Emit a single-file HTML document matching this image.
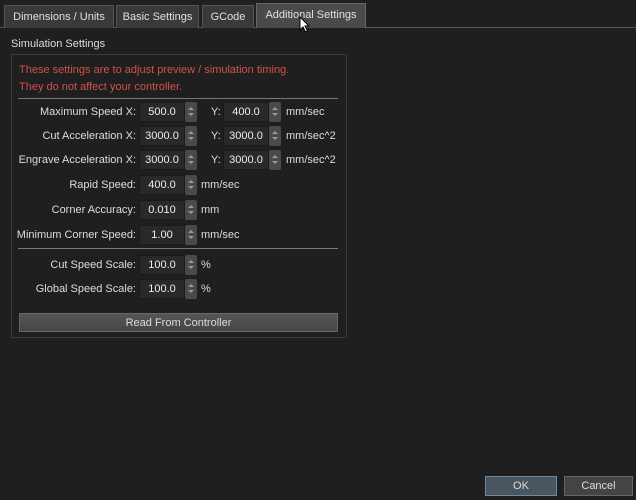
<!DOCTYPE html><html><head><style>
*{margin:0;padding:0;box-sizing:border-box}
body{width:636px;height:500px;background:#1f1f1f;font-family:"Liberation Sans",sans-serif;font-size:11px;color:#ddd;position:relative;overflow:hidden}
.a{position:absolute}
.tab{position:absolute;top:5px;height:23px;background:#3a3a3a;border:1px solid #555;border-bottom:none;line-height:22px;text-align:center;color:#e0e0e0}
.lbl{position:absolute;text-align:right;width:136px;left:0;line-height:20px}
.f{position:absolute;height:20px;background:#292929;border:1px solid #1a1a1a;text-align:center;line-height:18px;color:#eee}
.s{position:absolute;width:12px;height:20px;background:#4a4a4a;border-radius:2px}
.s:before{content:"";position:absolute;left:3px;top:5px;border:3px solid transparent;border-bottom:3px solid #999;border-top:none}
.s:after{content:"";position:absolute;left:3px;top:11px;border:3px solid transparent;border-top:3px solid #999;border-bottom:none}
.u{position:absolute;line-height:20px}
</style></head><body>
<div class="a" style="left:0;top:27px;width:636px;height:1px;background:#555"></div>
<div class="tab" style="left:4px;width:110px">Dimensions / Units</div>
<div class="tab" style="left:116px;width:83px">Basic Settings</div>
<div class="tab" style="left:202px;width:52px">GCode</div>
<div class="tab" style="left:256px;top:3px;height:25px;width:110px;background:#4a4a4a;border-color:#666">Additional Settings</div>
<div class="a" style="left:11px;top:37px;line-height:14px">Simulation Settings</div>
<div class="a" style="left:11px;top:54px;width:336px;height:284px;border:1px solid #3a3a3a"></div>
<div class="a" style="left:19px;top:62px;line-height:17px;color:#d0534a">These settings are to adjust preview / simulation timing.<br>They do not affect your controller.</div>
<div class="a" style="left:18px;top:98px;width:320px;height:1px;background:#777"></div>
<div class="a" style="left:18px;top:248px;width:320px;height:1px;background:#777"></div>

<div class="lbl" style="top:102px">Maximum Speed X:</div><div class="f" style="left:139px;top:102px;width:46px">500.0</div><div class="s" style="left:185px;top:102px"></div>
<div class="u" style="left:211px;top:102px">Y:</div><div class="f" style="left:223px;top:102px;width:46px">400.0</div><div class="s" style="left:269px;top:102px"></div><div class="u" style="left:286px;top:102px">mm/sec</div>

<div class="lbl" style="top:126px">Cut Acceleration X:</div><div class="f" style="left:139px;top:126px;width:46px">3000.0</div><div class="s" style="left:185px;top:126px"></div>
<div class="u" style="left:211px;top:126px">Y:</div><div class="f" style="left:223px;top:126px;width:46px">3000.0</div><div class="s" style="left:269px;top:126px"></div><div class="u" style="left:286px;top:126px">mm/sec^2</div>

<div class="lbl" style="top:150px">Engrave Acceleration X:</div><div class="f" style="left:139px;top:150px;width:46px">3000.0</div><div class="s" style="left:185px;top:150px"></div>
<div class="u" style="left:211px;top:150px">Y:</div><div class="f" style="left:223px;top:150px;width:46px">3000.0</div><div class="s" style="left:269px;top:150px"></div><div class="u" style="left:286px;top:150px">mm/sec^2</div>

<div class="lbl" style="top:175px">Rapid Speed:</div><div class="f" style="left:139px;top:175px;width:46px">400.0</div><div class="s" style="left:185px;top:175px"></div><div class="u" style="left:201px;top:175px">mm/sec</div>
<div class="lbl" style="top:200px">Corner Accuracy:</div><div class="f" style="left:139px;top:200px;width:46px">0.010</div><div class="s" style="left:185px;top:200px"></div><div class="u" style="left:201px;top:200px">mm</div>
<div class="lbl" style="top:225px">Minimum Corner Speed:</div><div class="f" style="left:139px;top:225px;width:46px">1.00</div><div class="s" style="left:185px;top:225px"></div><div class="u" style="left:201px;top:225px">mm/sec</div>

<div class="lbl" style="top:255px">Cut Speed Scale:</div><div class="f" style="left:139px;top:255px;width:46px">100.0</div><div class="s" style="left:185px;top:255px"></div><div class="u" style="left:201px;top:255px">%</div>
<div class="lbl" style="top:279px">Global Speed Scale:</div><div class="f" style="left:139px;top:279px;width:46px">100.0</div><div class="s" style="left:185px;top:279px"></div><div class="u" style="left:201px;top:279px">%</div>

<div class="a" style="left:19px;top:313px;width:319px;height:19px;background:linear-gradient(#555,#464646);border:1px solid #666;text-align:center;line-height:18px">Read From Controller</div>
<div class="a" style="left:485px;top:476px;width:72px;height:20px;background:#4a5560;border:1px solid #6a8aa5;text-align:center;line-height:19px">OK</div>
<div class="a" style="left:564px;top:476px;width:69px;height:20px;background:#444;border:1px solid #666;text-align:center;line-height:19px">Cancel</div>
<svg class="a" style="left:299px;top:16px" width="12" height="18" viewBox="0 0 12 18"><path d="M1 1 L1 14 L4 11 L6.5 16 L8.5 15 L6 10 L10 10 Z" fill="#fff" stroke="#000" stroke-width="1"/></svg>
</body></html>
